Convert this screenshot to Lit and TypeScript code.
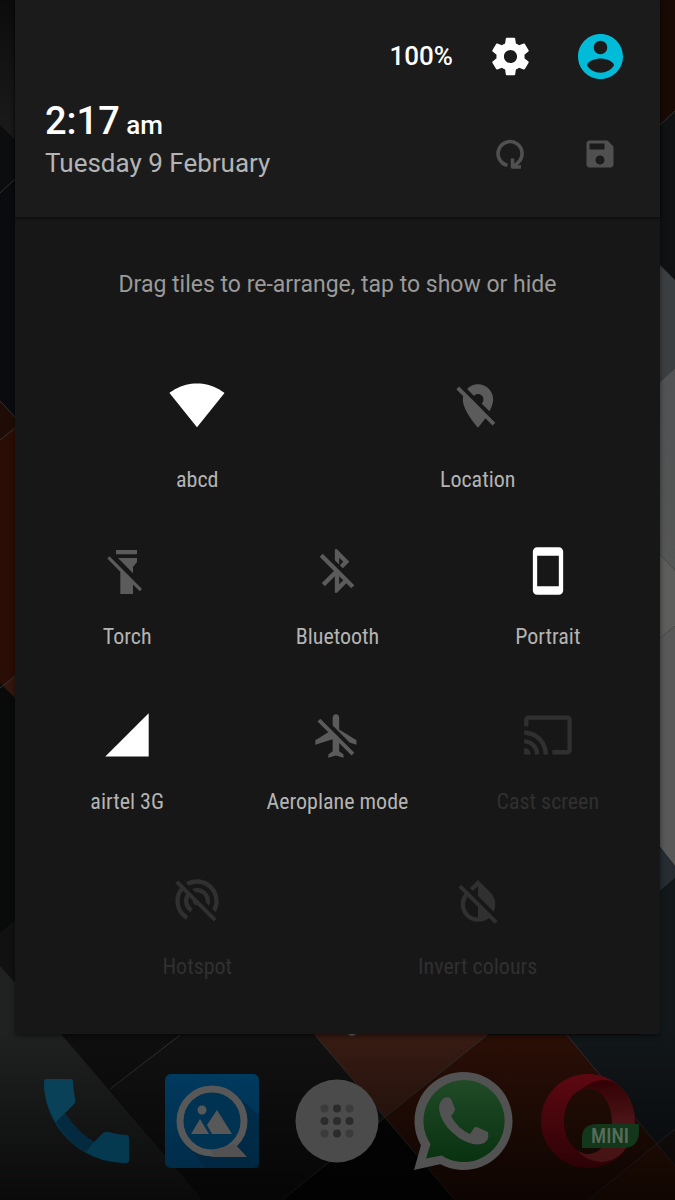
import { LitElement, html, css, svg, SVGTemplateResult } from 'lit';
import { customElement, property, state } from 'lit/decorators.js';
import { classMap } from 'lit/directives/class-map.js';

type TileState = 'on' | 'off' | 'hidden';

interface Tile {
  label: string;
  icon: string;
  state: TileState;
}

const icons: Record<string, { viewBox: string; path: string }> = {
  wifi: {
    viewBox: '1 1.5 22 22',
    path: 'M12.01 21.49L23.64 7c-.45-.34-4.93-4-11.64-4C5.28 3 .81 6.66.36 7l11.63 14.49.02.01z',
  },
  locationOff: {
    viewBox: '0 0 24 24',
    path: 'M12 6.5c1.38 0 2.5 1.12 2.5 2.5 0 .74-.33 1.39-.83 1.85l3.63 3.63c.98-1.86 1.7-3.8 1.7-5.48 0-3.87-3.13-7-7-7-1.98 0-3.76.83-5.04 2.15l3.19 3.19c.46-.52 1.11-.84 1.85-.84zm4.37 9.6l-4.63-4.63-.11-.11L3.27 3 2 4.27l3.18 3.18C5.07 7.95 5 8.47 5 9c0 5.25 7 13 7 13s1.67-1.85 3.38-4.35L18.73 21 20 19.73l-3.63-3.63z',
  },
  torchOff: {
    viewBox: '0 0 52 52',
    path: 'M15 5h21v4.3H15zM17 13h19v4l-4 5v6.3zM8.5 11.3L41 44l-2.2 2.2L32 39.4V49H19.3V26.7L6.3 13.6z',
  },
  bluetoothOff: {
    viewBox: '0 0 24 24',
    path: 'M13 5.83l1.88 1.88-1.6 1.6 1.41 1.41 3.02-3.02L12 2h-1v5.03l2 2v-3.2zM5.41 4L4 5.41 10.59 12 5 17.59 6.41 19 11 14.41V22h1l4.29-4.29 2.3 2.29L20 18.59 5.41 4zM13 18.17v-3.76l1.88 1.88L13 18.17z',
  },
  portrait: {
    viewBox: '0 0 24 24',
    path: 'M17 1.01L7 1c-1.1 0-1.99.9-1.99 2v18c0 1.1.89 2 1.99 2h10c1.1 0 2-.9 2-2V3c0-1.1-.9-1.99-2-1.99zM17 19H7V5h10v14z',
  },
  signal: {
    viewBox: '0 .5 24 24',
    path: 'M2 22h20V2z',
  },
  aeroplaneOff: {
    viewBox: '0 0 24 24',
    path: 'M13 9V3.5c0-.83-.67-1.5-1.5-1.5S10 2.67 10 3.5v3.68l7.83 7.83L21 16v-2l-8-5zM3 5.27l4.99 4.99L2 14v2l8-2.5V19l-2 1.5V22l3.5-1 3.5 1v-1.5L13 19v-3.73L18.73 21 20 19.73 4.27 4 3 5.27z',
  },
  cast: {
    viewBox: '0 .5 24 24',
    path: 'M21 3H3c-1.1 0-2 .9-2 2v3h2V5h18v14h-7v2h7c1.1 0 2-.9 2-2V5c0-1.1-.9-2-2-2zM1 18v3h3c0-1.66-1.34-3-3-3zm0-4v2c2.76 0 5 2.24 5 5h2c0-3.87-3.13-7-7-7zm0-4v2c4.97 0 9 4.03 9 9h2c0-6.08-4.93-11-11-11z',
  },
  hotspotOff: {
    viewBox: '0 0 24 24',
    path: 'M17.56 14.24c.28-.69.44-1.45.44-2.24 0-3.31-2.69-6-6-6-.79 0-1.55.16-2.24.44l1.62 1.62c.2-.03.41-.06.62-.06 2.21 0 4 1.79 4 4 0 .21-.02.42-.05.63l1.61 1.61zM12 4c4.42 0 8 3.58 8 8 0 1.35-.35 2.62-.95 3.74l1.47 1.47C21.46 15.69 22 13.91 22 12c0-5.52-4.48-10-10-10-1.91 0-3.69.55-5.21 1.47l1.46 1.46C9.37 4.34 10.65 4 12 4zM3.27 2.5L2 3.77l2.1 2.1C2.79 7.57 2 9.69 2 12c0 3.7 2.01 6.92 4.99 8.65l1-1.73C5.61 17.53 4 14.96 4 12c0-1.76.57-3.38 1.53-4.69l1.43 1.44C6.36 9.68 6 10.8 6 12c0 2.22 1.21 4.15 3 5.19l1-1.74c-1.19-.7-2-1.97-2-3.45 0-.65.17-1.25.44-1.79l1.58 1.58L10 12c0 1.1.9 2 2 2l.21-.02.01.01 7.51 7.51L21 20.23 4.27 3.5l-1-1z',
  },
  invertOff: {
    viewBox: '0 0 24 24',
    path: 'M20.65 20.87l-2.35-2.35-6.3-6.29-3.56-3.57-1.42-1.41L4.27 4.5 3 5.77l2.78 2.78c-2.55 3.14-2.36 7.76.56 10.69C7.9 20.8 9.95 21.58 12 21.58c1.79 0 3.57-.59 5.03-1.78l2.7 2.7L21 21.23l-.35-.36zM12 19.59c-1.6 0-3.11-.62-4.24-1.76C6.62 16.69 6 15.19 6 13.59c0-1.32.43-2.57 1.21-3.6L12 14.77v4.82zM12 5.1v4.58l7.25 7.26c1.37-2.96.84-6.57-1.6-9.01L12 2.27l-3.7 3.7 1.41 1.41L12 5.1z',
  },
};

@customElement('quick-tile')
export class QuickTile extends LitElement {
  @property() label = '';
  @property() icon = 'wifi';
  @property() state: TileState = 'on';
  @property({ type: Boolean }) primary = false;

  static styles = css`
    :host {
      display: block;
    }

    .tile {
      display: flex;
      flex-direction: column;
      align-items: center;
      gap: 28px;
      box-sizing: border-box;
      width: 100%;
      height: 165px;
      padding: 30px 0 0;
      border: 0;
      background: none;
      color: #fff;
      font: 400 22px/24px "Roboto Condensed", Roboto, sans-serif;
      cursor: pointer;
    }

    .primary {
      gap: 36px;
    }

    .off {
      color: #5b5b5b;
    }

    .hidden {
      color: #303030;
    }

    svg {
      display: block;
      width: 52px;
      height: 52px;
      overflow: visible;
      fill: currentColor;
    }

    .label {
      color: #b4b4b4;
      white-space: nowrap;
    }

    .hidden .label {
      color: #303030;
    }
  `;

  render() {
    const icon = icons[this.icon];
    return html`
      <button
        type="button"
        class=${classMap({
          tile: true,
          primary: this.primary,
          off: this.state === 'off',
          hidden: this.state === 'hidden',
        })}
      >
        <svg viewBox=${icon.viewBox} aria-hidden="true"><path d=${icon.path} /></svg>
        <span class="label">${this.label}</span>
      </button>
    `;
  }
}

@customElement('home-wallpaper')
export class HomeWallpaper extends LitElement {
  static styles = css`
    :host {
      display: block;
    }

    svg {
      display: block;
      width: 100%;
      height: 100%;
    }

    .edge {
      fill: none;
      stroke: #333;
      stroke-width: 1;
    }
  `;

  render() {
    return html`
      <svg viewBox="0 0 675 1200" preserveAspectRatio="xMidYMid slice" aria-hidden="true">
        <defs>
          <linearGradient id="top" x1="0" y1="0" x2="0" y2="140" gradientUnits="userSpaceOnUse">
            <stop offset="0" stop-color="#0c0c0c" />
            <stop offset="1" stop-color="#1b1b1b" />
          </linearGradient>
          <linearGradient id="pale" x1="0" y1="0" x2="0" y2="1">
            <stop offset="0" stop-color="#505254" />
            <stop offset="1" stop-color="#555655" />
          </linearGradient>
          <linearGradient id="fade" x1="0" y1="0" x2="0" y2="1">
            <stop offset="0" stop-color="#000" stop-opacity="0" />
            <stop offset="1" stop-color="#000" stop-opacity=".7" />
          </linearGradient>
        </defs>
        <rect width="675" height="1200" fill="#0f0f0f" />

        <path d="M0 0H340V460L0 125z" fill="url(#top)" />
        <path d="M0 125L15 140V417L0 401z" fill="#0b0d0f" />
        <path d="M0 193L15 179V417L0 401z" fill="#090b0e" />
        <path d="M0 401L15 417V428L0 440z" fill="#200c06" />
        <path d="M0 440L15 428V698L0 683z" fill="#2a0e05" />
        <path d="M0 688L15 676V698z" fill="#32170f" />
        <path d="M0 683L15 698V920L0 933z" fill="#090a0a" />
        <path d="M0 933L15 920V983L0 966z" fill="#111" />
        <path d="M0 966L62 1035L203 1200H0z" fill="#202121" />

        <path d="M640 0H675V111L640 144z" fill="#1a0a05" />
        <path d="M640 144L675 111V280L640 245z" fill="#0f1113" />
        <path d="M660 265L675 280V368L660 382z" fill="#3b3f42" />
        <path d="M660 382L675 368V570L660 555z" fill="url(#pale)" />
        <path d="M660 555L675 570V626L660 638z" fill="#5d5d5c" />
        <path d="M660 638L675 626V866L660 847z" fill="#575857" />
        <path d="M660 847L675 866V877L660 890z" fill="#262c31" />
        <path d="M660 890L675 877V1166L657 1144L567 1035H640z" fill="#12171a" />

        <path d="M62 1035H180L110 1089z" fill="#0f0f0f" />
        <path d="M110 1089L180 1035H315L385 1117L282 1200H203z" fill="#121212" />
        <path d="M385 1117L455 1200H282z" fill="#060606" />
        <path d="M300 1018H508L385 1117z" fill="#381c13" />
        <path d="M487 1035H567L657 1144L588 1200H455L385 1117z" fill="#2b0f06" />
        <path d="M657 1144L675 1129V1166z" fill="#1c1412" />
        <path d="M588 1200L657 1144L675 1166V1200z" fill="#341305" />

        <path
          class="edge"
          d="M180 1035L110 1089M315 1035L455 1200M487 1035L282 1200M567 1035L675 1166M588 1200L675 1129M0 193L15 179M0 440L15 428M0 688L15 676M0 401L15 417M660 125L675 111M660 890L675 877"
        />
        <circle cx="352" cy="1031" r="5" fill="#666" />
        <rect y="1030" width="675" height="170" fill="url(#fade)" />
      </svg>
    `;
  }
}

const dockApps: { name: string; art: SVGTemplateResult }[] = [
  {
    name: 'Phone',
    art: svg`
      <path d="M11 8H34Q37 8 37 11Q37 19 39 28Q40 31 37 34L29 42Q41 61 58 71L67 62Q70 60 73 61Q82 64 90 64Q93 64 93 67V89Q93 92 90 92C45 92 8 56 8 11Q8 8 11 8z" fill="#05394f" />
      <path d="M11 8H34Q37 8 37 11Q37 19 39 28Q40 31 37 34L20 51Q8 33 8 11Q8 8 11 8z" fill="#084158" />
      <path d="M29 42Q41 61 58 71L50 81Q31 71 20 51z" fill="#042a3f" />
    `,
  },
  {
    name: 'Gallery',
    art: svg`
      <defs>
        <linearGradient id="blue" x1="0" y1="0" x2="0" y2="1">
          <stop offset="0" stop-color="#003a5f" />
          <stop offset="1" stop-color="#002c49" />
        </linearGradient>
      </defs>
      <rect x="3" y="3" width="94" height="94" rx="6" fill="url(#blue)" />
      <path d="M76 26L97 44V97H44L25 75z" fill="#00243c" opacity=".5" />
      <circle cx="50" cy="50" r="32" fill="#003252" stroke="#585858" stroke-width="7" />
      <path d="M50 79L73 73L85 86H50z" fill="#525252" />
      <circle cx="40" cy="39" r="4.5" fill="#585858" />
      <path d="M29 63L38 48L47 63zM55 39L70 63H50L45 54z" fill="#585858" />
    `,
  },
  {
    name: 'All apps',
    art: svg`
      <circle cx="50" cy="50" r="41.5" fill="#4b4b4b" />
      <g fill="#3b3b3b">
        <circle cx="37.5" cy="37.5" r="4" /><circle cx="62.5" cy="37.5" r="4" />
        <circle cx="37.5" cy="62.5" r="4" /><circle cx="62.5" cy="62.5" r="4" />
      </g>
      <g fill="#2b2b2b">
        <circle cx="50" cy="37.5" r="4" /><circle cx="37.5" cy="50" r="4" />
        <circle cx="50" cy="50" r="4" /><circle cx="62.5" cy="50" r="4" />
        <circle cx="50" cy="62.5" r="4" />
      </g>
    `,
  },
  {
    name: 'WhatsApp',
    art: svg`
      <defs>
        <linearGradient id="green" x1="0" y1="0" x2="0" y2="1">
          <stop offset="0" stop-color="#214a27" />
          <stop offset="1" stop-color="#083210" />
        </linearGradient>
      </defs>
      <circle cx="50.5" cy="50" r="49" fill="#525252" />
      <path d="M8 74L1 99L28 93z" fill="#525252" />
      <path d="M50.5 9a41 41 0 1 1-22 75.5L13 87.5L17.5 73A41 41 0 0 1 50.5 9z" fill="url(#green)" />
      <path d="M31 27Q36 25 38 28L42 38Q42 41 38 45Q45 58 57 63L61 57Q63 55 66 57L75 61Q77 71 68 73Q59 75 46 67Q31 56 27 43Q24 32 31 27z" fill="#525252" />
    `,
  },
  {
    name: 'Opera Mini',
    art: svg`
      <defs>
        <linearGradient id="red" x1="0" y1="0" x2="0" y2="1">
          <stop offset="0" stop-color="#5e0811" />
          <stop offset="1" stop-color="#2c0206" />
        </linearGradient>
        <linearGradient id="rose" x1="0" y1="0" x2="0" y2="1">
          <stop offset="0" stop-color="#320004" />
          <stop offset=".5" stop-color="#4b1416" />
          <stop offset="1" stop-color="#461315" />
        </linearGradient>
      </defs>
      <path fill-rule="evenodd" d="M49 3a47 47 0 1 0 0 94a47 47 0 1 0 0-94zM49 17c13 0 24 15 24 33s-11 33-24 33s-24-15-24-33s11-33 24-33z" fill="url(#red)" />
      <path d="M38 22Q50 9 66 9Q76 10 81 16A47 47 0 0 1 81 84Q72 91 62 91Q47 90 38 79Q45 84 50 83C63 82 73 68 73 50C73 31 62 17 49 17Q43 17 38 22z" fill="url(#rose)" />
      <path d="M58 53H100V60Q100 77 84 77H43V67Q43 53 58 53z" fill="#12371a" />
      <text class="badge" x="71" y="72" text-anchor="middle">MINI</text>
    `,
  },
];

@customElement('app-dock')
export class AppDock extends LitElement {
  static styles = css`
    :host {
      display: flex;
      padding: 37px 23px 27px;
    }

    .app {
      flex: 1;
      display: flex;
      justify-content: center;
      padding: 0;
      border: 0;
      background: none;
      cursor: pointer;
    }

    svg {
      display: block;
      flex: none;
      width: 100px;
      height: 100px;
      overflow: visible;
    }

    .badge {
      font: 500 20px "Roboto Condensed", Roboto, sans-serif;
      fill: #596b5c;
    }
  `;

  render() {
    return dockApps.map(
      (app) => html`
        <button type="button" class="app" aria-label=${app.name}>
          <svg viewBox="0 0 100 100">${app.art}</svg>
        </button>
      `
    );
  }
}

@customElement('app-root')
export class AppRoot extends LitElement {
  @state() private rows: Tile[][] = [
    [
      { label: 'abcd', icon: 'wifi', state: 'on' },
      { label: 'Location', icon: 'locationOff', state: 'off' },
    ],
    [
      { label: 'Torch', icon: 'torchOff', state: 'off' },
      { label: 'Bluetooth', icon: 'bluetoothOff', state: 'off' },
      { label: 'Portrait', icon: 'portrait', state: 'on' },
    ],
    [
      { label: 'airtel 3G', icon: 'signal', state: 'on' },
      { label: 'Aeroplane mode', icon: 'aeroplaneOff', state: 'off' },
      { label: 'Cast screen', icon: 'cast', state: 'hidden' },
    ],
    [
      { label: 'Hotspot', icon: 'hotspotOff', state: 'hidden' },
      { label: 'Invert colours', icon: 'invertOff', state: 'hidden' },
    ],
  ];

  static styles = css`
    :host {
      display: block;
      position: relative;
      min-height: 100vh;
      overflow: hidden;
      background: #0f0f0f;
      font-family: Roboto, sans-serif;
    }

    home-wallpaper {
      position: absolute;
      inset: 0;
    }

    .screen {
      position: relative;
    }

    .panel {
      margin: 0 15px;
      padding-bottom: 24px;
      border-radius: 0 0 3px 3px;
      background: #171717;
      box-shadow: 0 2px 5px rgba(0, 0, 0, 0.5);
    }

    header {
      display: flex;
      justify-content: space-between;
      box-sizing: border-box;
      height: 217px;
      padding: 0 15px 0 30px;
      background: #1b1b1b;
      box-shadow: 0 1px 3px rgba(0, 0, 0, 0.6);
    }

    .clock {
      padding-top: 97px;
      white-space: nowrap;
    }

    .time {
      color: #fff;
      font-size: 38px;
      font-weight: 500;
      line-height: 48px;
    }

    .period {
      font-size: 26px;
      line-height: 26px;
    }

    .date {
      color: #b4b4b4;
      font-size: 26px;
      line-height: 36px;
    }

    .controls {
      display: grid;
      grid-template-columns: auto 90px 90px;
      grid-template-rows: 112px 84px;
      align-items: center;
    }

    .battery {
      padding-right: 12px;
      color: #fff;
      font-size: 26px;
      font-weight: 500;
      line-height: 36px;
    }

    .control {
      display: flex;
      align-items: center;
      justify-content: center;
      height: 84px;
      padding: 0;
      border: 0;
      background: none;
      color: #fff;
      cursor: pointer;
    }

    .control svg {
      display: block;
      width: 45px;
      height: 45px;
      fill: currentColor;
    }

    .account {
      color: #00bcd8;
    }

    .reset {
      grid-column: 2;
    }

    .small {
      color: #505050;
    }

    .small svg {
      width: 36px;
      height: 36px;
    }

    .hint {
      margin: 0;
      padding: 54px 15px 51px;
      color: #9a9a9a;
      font-size: 23px;
      line-height: 28px;
      text-align: center;
    }

    .row {
      display: flex;
      justify-content: space-evenly;
      padding: 0 7px;
    }

    .row quick-tile {
      flex: 0 0 33.33%;
    }
  `;

  render() {
    return html`
      <home-wallpaper></home-wallpaper>
      <div class="screen">
        <main class="panel">
          <header>
            <div class="clock">
              <div class="time">2:17<span class="period"> am</span></div>
              <div class="date">Tuesday 9 February</div>
            </div>
            <div class="controls">
              <span class="battery">100%</span>
              <button type="button" class="control" aria-label="Settings">
                <svg viewBox="0 0 24 24">
                  <path d="M19.43 12.98c.04-.32.07-.64.07-.98s-.03-.66-.07-.98l2.11-1.65c.19-.15.24-.42.12-.64l-2-3.46c-.12-.22-.39-.3-.61-.22l-2.49 1c-.52-.4-1.08-.73-1.69-.98l-.38-2.65C14.46 2.18 14.25 2 14 2h-4c-.25 0-.46.18-.49.42l-.38 2.65c-.61.25-1.17.59-1.69.98l-2.49-1c-.23-.09-.49 0-.61.22l-2 3.46c-.13.22-.07.49.12.64l2.11 1.65c-.04.32-.07.65-.07.98s.03.66.07.98l-2.11 1.65c-.19.15-.24.42-.12.64l2 3.46c.12.22.39.3.61.22l2.49-1c.52.4 1.08.73 1.69.98l.38 2.65c.03.24.24.42.49.42h4c.25 0 .46-.18.49-.42l.38-2.65c.61-.25 1.17-.59 1.69-.98l2.49 1c.23.09.49 0 .61-.22l2-3.46c.12-.22.07-.49-.12-.64l-2.11-1.65zM12 15.5c-1.93 0-3.5-1.57-3.5-3.5s1.57-3.5 3.5-3.5 3.5 1.57 3.5 3.5-1.57 3.5-3.5 3.5z" />
                </svg>
              </button>
              <button type="button" class="control account" aria-label="Account">
                <svg viewBox="2 2 20 20">
                  <path d="M12 2C6.48 2 2 6.48 2 12s4.48 10 10 10 10-4.48 10-10S17.52 2 12 2zm0 3c1.66 0 3 1.34 3 3s-1.34 3-3 3-3-1.34-3-3 1.34-3 3-3zm0 14.2c-2.5 0-4.71-1.28-6-3.22.03-1.99 4-3.08 6-3.08 1.99 0 5.97 1.09 6 3.08-1.29 1.94-3.5 3.22-6 3.22z" />
                </svg>
              </button>
              <button type="button" class="control small reset" aria-label="Reset tiles">
                <svg viewBox="-4 -4 36 36">
                  <path
                    d="M11.5 25.3A12 12 0 1 1 21.5 23L17 27M16.5 18.5V27H25"
                    fill="none"
                    stroke="currentColor"
                    stroke-width="3.6"
                    stroke-linejoin="round"
                  />
                </svg>
              </button>
              <button type="button" class="control small" aria-label="Save tiles">
                <svg viewBox="0 0 24 24">
                  <path d="M17 3H5c-1.11 0-2 .9-2 2v14c0 1.1.89 2 2 2h14c1.1 0 2-.9 2-2V7l-4-4zm-5 16c-1.66 0-3-1.34-3-3s1.34-3 3-3 3 1.34 3 3-1.34 3-3 3zm3-10H5V5h10v4z" />
                </svg>
              </button>
            </div>
          </header>
          <p class="hint">Drag tiles to re-arrange, tap to show or hide</p>
          ${this.rows.map(
            (row, i) => html`
              <div class="row">
                ${row.map(
                  (tile) => html`
                    <quick-tile
                      .label=${tile.label}
                      .icon=${tile.icon}
                      .state=${tile.state}
                      ?primary=${i === 0}
                    ></quick-tile>
                  `
                )}
              </div>
            `
          )}
        </main>
        <app-dock></app-dock>
      </div>
    `;
  }
}
